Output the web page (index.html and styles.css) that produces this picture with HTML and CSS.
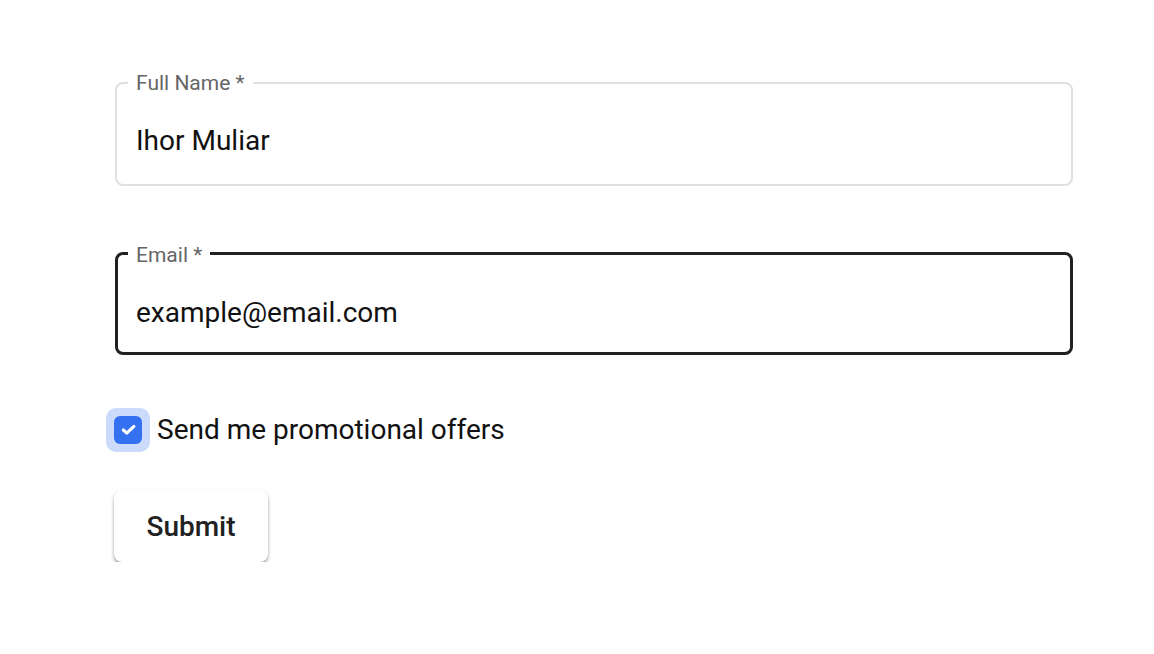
FILE: index.html
```html
<!DOCTYPE html>
<html>
<head>
<meta charset="utf-8">
<link rel="stylesheet" href="styles.css">
</head>
<body>
<form class="form">
  <fieldset class="field">
    <legend class="field-label">Full Name *</legend>
    <div class="field-value">Ihor Muliar</div>
  </fieldset>
  <fieldset class="field field-focused">
    <legend class="field-label">Email *</legend>
    <div class="field-value">example@email.com</div>
  </fieldset>
  <div class="check-row">
    <span class="check-halo">
      <span class="check-box">
        <svg width="28" height="28" viewBox="0 0 28 28"><path d="M9.3 14 L12.8 17.1 L19.9 10.4" fill="none" stroke="#fff" stroke-width="3.1" stroke-linecap="round" stroke-linejoin="round"/></svg>
      </span>
    </span>
    <span class="check-text">Send me promotional offers</span>
  </div>
  <div class="btn">Submit</div>
</form>
</body>
</html>
```
FILE: styles.css
```css
html, body {
  margin: 0;
  padding: 0;
  background: #fff;
}
body {
  font-family: Roboto, "Liberation Sans", sans-serif;
  color: #111;
}
.form {
  padding: 71px 0 0 115px;
  width: 958px;
}
.field {
  margin: 0;
  padding: 0 19px 27px;
  border: 2px solid #e0e0e0;
  border-radius: 8px;
  min-inline-size: 0;
}
.field-label {
  font-size: 21px;
  line-height: 24px;
  color: #666;
  padding: 0 8px;
  margin-left: -8px;
}
.field-value {
  font-size: 28px;
  line-height: 32px;
  padding-top: 30px;
  color: #111;
}
.field-focused {
  margin-top: 53px;
  border: 3px solid #212121;
  padding: 0 18px 23px;
}
.field-focused .field-label {
  padding-top: 4px;
}
.field-focused .field-value {
  padding-top: 30px;
}
.check-row {
  display: flex;
  align-items: center;
  margin-top: 53px;
  margin-left: -9px;
}
.check-halo {
  width: 44px;
  height: 44px;
  border-radius: 10px;
  background: #ccdbfb;
  display: flex;
  align-items: center;
  justify-content: center;
}
.check-box {
  width: 28px;
  height: 28px;
  border-radius: 6px;
  background: #3371f0;
}
.check-box svg {
  display: block;
}
.check-text {
  font-size: 28px;
  line-height: 32px;
  margin-left: 7px;
  color: #111;
}
.btn {
  margin-top: 38px;
  margin-left: -1px;
  width: 154px;
  height: 72px;
  border-radius: 8px;
  background: #fff;
  box-shadow: 0 3px 4px -1px rgba(0, 0, 0, 0.45), 0 1px 3px rgba(0, 0, 0, 0.12);
  display: flex;
  align-items: center;
  justify-content: center;
  font-size: 28px;
  font-weight: 500;
  color: #212121;
}
```
